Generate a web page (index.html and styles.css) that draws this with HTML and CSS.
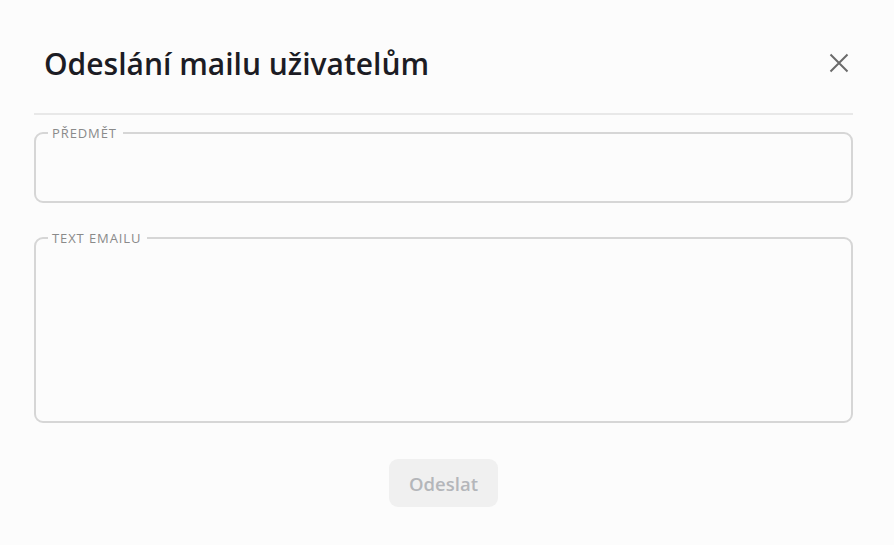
FILE: index.html
```html
<!DOCTYPE html>
<html lang="cs">
<head>
<meta charset="utf-8">
<link rel="stylesheet" href="styles.css">
</head>
<body>
<div class="dialog">
  <div class="header">
    <h1 class="title">Odeslání mailu uživatelům</h1>
    <button class="close" aria-label="Zavřít">
      <svg width="20" height="20" viewBox="0 0 20 20"><path d="M1.5 1.5 L18.5 18.5 M18.5 1.5 L1.5 18.5" stroke="#6b6b6b" stroke-width="2" fill="none"/></svg>
    </button>
  </div>
  <div class="divider"></div>
  <form class="form">
    <fieldset class="field field-subject">
      <legend class="legend">PŘEDMĚT</legend>
    </fieldset>
    <fieldset class="field field-body">
      <legend class="legend">TEXT EMAILU</legend>
    </fieldset>
    <div class="actions">
      <button type="button" class="send">Odeslat</button>
    </div>
  </form>
</div>
</body>
</html>
```
FILE: styles.css
```css
html, body {
  margin: 0;
  padding: 0;
  background: #fcfcfc;
  font-family: "Open Sans", "Noto Sans", sans-serif;
}
.dialog {
  width: 894px;
  height: 545px;
  box-sizing: border-box;
  padding: 0 41px 0 34px;
}
.header {
  display: flex;
  align-items: center;
  justify-content: space-between;
  height: 113px;
  padding: 14px 4px 0 10px;
  box-sizing: border-box;
}
.title {
  margin: 0;
  font-size: 30px;
  font-weight: 600;
  color: #1c1c24;
  letter-spacing: 0;
}
.close {
  border: 0;
  background: transparent;
  padding: 0;
  width: 20px;
  height: 20px;
  display: flex;
  margin-top: -1px;
}
.divider {
  height: 2px;
  background: #e8e8e8;
}
.form {
  display: flex;
  flex-direction: column;
  padding-top: 9px;
}
.field {
  margin: 0;
  border: 2px solid #d6d6d6;
  border-radius: 9px;
  padding: 0 12px;
}
.field-subject {
  height: 79px;
  box-sizing: border-box;
}
.field-body {
  height: 194px;
  box-sizing: border-box;
  margin-top: 26px;
}
.legend {
  font-size: 13px;
  letter-spacing: 0.9px;
  color: #8a8a8a;
  padding: 0 6px 0 4px;
  line-height: 18px;
}
.actions {
  display: flex;
  justify-content: center;
  padding-top: 36px;
}
.send {
  width: 109px;
  height: 48px;
  border: 0;
  border-radius: 9px;
  background: #f0f0f0;
  color: #b4b6ba;
  font-family: "Open Sans", sans-serif;
  font-size: 18.5px;
  font-weight: 600;
}
```
